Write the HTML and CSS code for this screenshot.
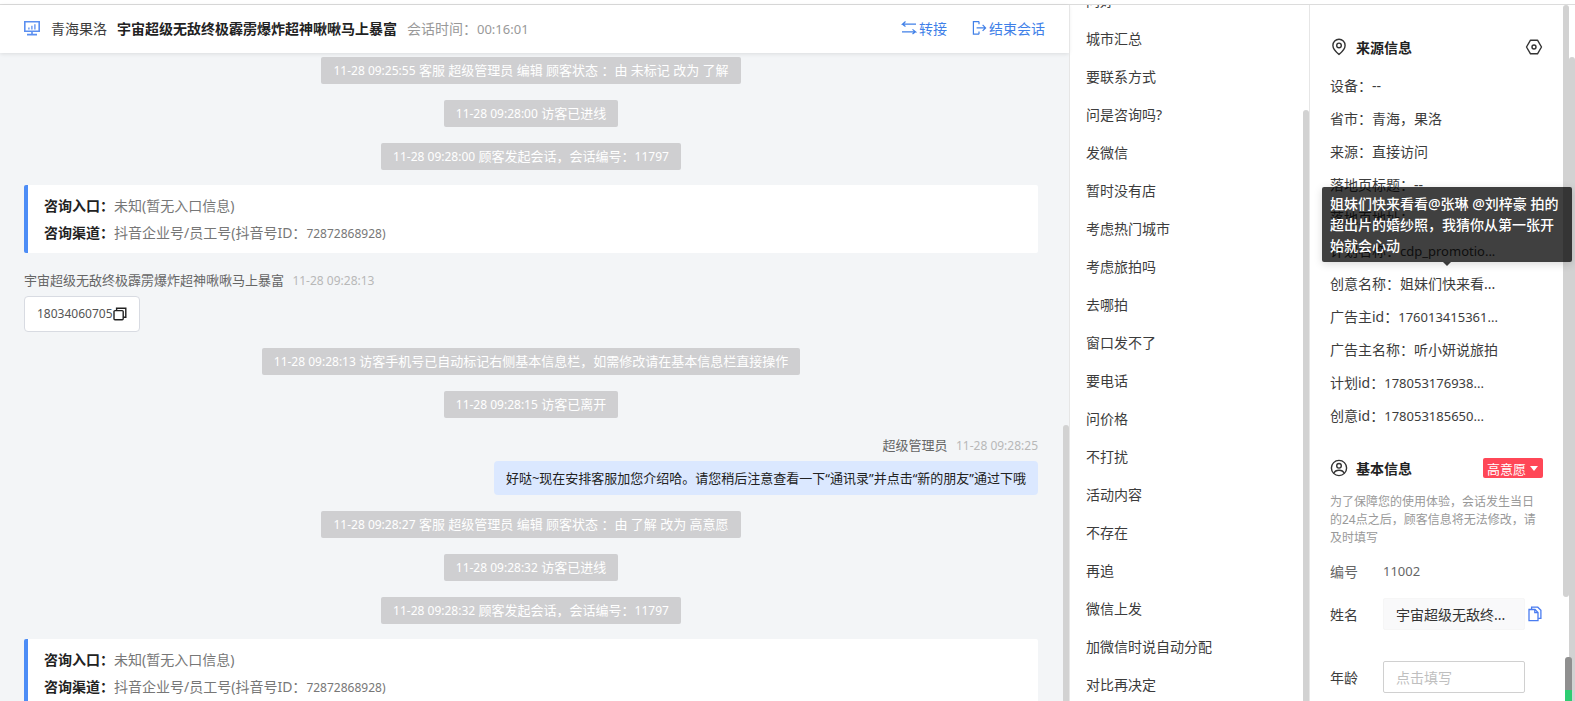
FILE: index.html
```
<!DOCTYPE html>
<html lang="zh-CN">
<head>
  <meta charset="UTF-8">
  <meta name="viewport" content="width=device-width, initial-scale=1.0">
  <title>会话详情</title>
  <link rel="stylesheet" href="styles.css">
</head>
<body>
  <div class="app">
    <main class="chat">
      <header class="chat-header">
        <svg class="icon-monitor" width="16" height="16" viewBox="0 0 16 16" fill="none" stroke="#5b8ff0" stroke-width="1.6">
          <path d="M0.800 1.800H15.200V11.200H0.800ZM8 11.500V14M3 14.600H13"/>
          <path d="M4.900 9.400V7.400M7.900 9.400V5.800M10.900 9.400V4.200" stroke-width="1.3"/>
        </svg>
        <span class="region">青海果洛</span>
        <h1>宇宙超级无敌终极霹雳爆炸超神啾啾马上暴富</h1>
        <p class="duration">会话时间：<span class="num">00:16:01</span></p>
        <div class="actions">
          <button type="button">
            <svg width="16" height="16" viewBox="0 0 16 16" fill="none" stroke="currentColor" stroke-width="1.2">
              <path d="M4.500 1.500L1.500 4.200H15M1.500 4.200L4.500 6.400M1 11.800H14.500L11.500 9.400M14.500 11.800L11.500 14"/>
            </svg>
            转接
          </button>
          <button type="button">
            <svg width="16" height="16" viewBox="0 0 16 16" fill="none" stroke="currentColor" stroke-width="1.2">
              <path d="M8 1.600H2.400V14.200H8M8 11.400V14.200M8 1.600V4.200M5.600 7.900H14.400M11.600 4.900L14.600 7.900L11.600 10.900"/>
            </svg>
            结束会话
          </button>
        </div>
      </header>

      <div class="messages">
        <p class="notice"><time>11-28 09:25:55</time> 客服 超级管理员 编辑 顾客状态 ：由 未标记 改为 了解</p>
        <p class="notice"><time>11-28 09:28:00</time> 访客已进线</p>
        <p class="notice"><time>11-28 09:28:00</time> 顾客发起会话，会话编号：<span class="num">11797</span></p>

        <dl class="entry">
          <div><dt>咨询入口：</dt><dd>未知(暂无入口信息)</dd></div>
          <div><dt>咨询渠道：</dt><dd>抖音企业号/员工号(抖音号ID：<span class="num">72872868928)</span></dd></div>
        </dl>

        <div class="message">
          <p class="meta">宇宙超级无敌终极霹雳爆炸超神啾啾马上暴富 <time>11-28 09:28:13</time></p>
          <div class="bubble visitor">
            <span class="num">18034060705</span>
            <button type="button" class="copy" aria-label="复制">
              <svg width="14" height="14" viewBox="0 0 14 14" fill="none" stroke="#222" stroke-width="1.4">
                <rect x="1" y="3.600" width="9.200" height="9.200" rx="1"/>
                <path d="M3.600 3.400V1.200H12.800V10.200H10.400"/>
              </svg>
            </button>
          </div>
        </div>

        <p class="notice"><time>11-28 09:28:13</time> 访客手机号已自动标记右侧基本信息栏，如需修改请在基本信息栏直接操作</p>
        <p class="notice"><time>11-28 09:28:15</time> 访客已离开</p>

        <div class="message mine">
          <p class="meta">超级管理员 <time>11-28 09:28:25</time></p>
          <div class="bubble">好哒~现在安排客服加您介绍哈。请您稍后注意查看一下“通讯录”并点击“新的朋友”通过下哦</div>
        </div>

        <p class="notice"><time>11-28 09:28:27</time> 客服 超级管理员 编辑 顾客状态 ：由 了解 改为 高意愿</p>
        <p class="notice"><time>11-28 09:28:32</time> 访客已进线</p>
        <p class="notice"><time>11-28 09:28:32</time> 顾客发起会话，会话编号：<span class="num">11797</span></p>

        <dl class="entry">
          <div><dt>咨询入口：</dt><dd>未知(暂无入口信息)</dd></div>
          <div><dt>咨询渠道：</dt><dd>抖音企业号/员工号(抖音号ID：<span class="num">72872868928)</span></dd></div>
        </dl>
      </div>
      <div class="thumb thumb-chat"></div>
    </main>

    <nav class="replies">
      <ul>
        <li>问好</li>
        <li>城市汇总</li>
        <li>要联系方式</li>
        <li>问是咨询吗?</li>
        <li>发微信</li>
        <li>暂时没有店</li>
        <li>考虑热门城市</li>
        <li>考虑旅拍吗</li>
        <li>去哪拍</li>
        <li>窗口发不了</li>
        <li>要电话</li>
        <li>问价格</li>
        <li>不打扰</li>
        <li>活动内容</li>
        <li>不存在</li>
        <li>再追</li>
        <li>微信上发</li>
        <li>加微信时说自动分配</li>
        <li>对比再决定</li>
      </ul>
      <div class="thumb thumb-replies"></div>
    </nav>

    <aside class="info">
      <section class="source">
        <div class="title">
          <svg width="18" height="18" viewBox="0 0 18 18" fill="none" stroke="#333" stroke-width="1.4">
            <path d="M9 16.400C5.400 13.400 2.900 10.600 2.900 7.400A6.100 6.100 0 0 1 15.100 7.400C15.100 10.600 12.600 13.400 9 16.400Z"/>
            <circle cx="9" cy="7.400" r="2.300"/>
          </svg>
          <h2>来源信息</h2>
          <button type="button" class="setting" aria-label="设置">
            <svg width="18" height="18" viewBox="0 0 18 18" fill="none" stroke="#333" stroke-width="1.4">
              <path d="M5.500 2.200H12.500L16.500 9L12.500 15.800H5.500L1.500 9Z" stroke-linejoin="round"/>
              <circle cx="9" cy="9" r="2"/>
            </svg>
          </button>
        </div>
        <ul>
          <li>设备：--</li>
          <li>省市：青海，果洛</li>
          <li>来源：直接访问</li>
          <li>落地页标题：--</li>
          <li>落地页地址：</li>
          <li>计划名称：<span class="num">cdp_promotio...</span></li>
          <li class="has-tip">
            创意名称：姐妹们快来看...
            <div class="tooltip" role="tooltip">姐妹们快来看看@张琳 @刘梓豪 拍的超出片的婚纱照，我猜你从第一张开始就会心动</div>
          </li>
          <li>广告主id：<span class="num">176013415361...</span></li>
          <li>广告主名称：听小妍说旅拍</li>
          <li>计划id：<span class="num">178053176938...</span></li>
          <li>创意id：<span class="num">178053185650...</span></li>
        </ul>
      </section>

      <section class="basic">
        <div class="title">
          <svg width="18" height="18" viewBox="0 0 18 18" fill="none" stroke="#333" stroke-width="1.4">
            <circle cx="9" cy="9" r="7.600"/>
            <circle cx="9" cy="6.800" r="2.300"/>
            <path d="M3.800 14.200C4.800 11.800 6.600 11.200 9 11.200S13.200 11.800 14.200 14.200"/>
          </svg>
          <h2>基本信息</h2>
          <button type="button" class="level">高意愿<i></i></button>
        </div>
        <p class="tips">为了保障您的使用体验，会话发生当日的24点之后，顾客信息将无法修改，请及时填写</p>
        <div class="row number">
          <span>编号</span>
          <span class="num">11002</span>
        </div>
        <div class="row">
          <label for="name">姓名</label>
          <input type="text" id="name" class="filled" value="宇宙超级无敌终..." readonly>
          <button type="button" class="copy" aria-label="复制姓名">
            <svg width="14" height="16" viewBox="0 0 14 16" fill="none" stroke="#4a7cf0" stroke-width="1.3">
              <path d="M1 3.500H7L10 6.500V14.700H1Z"/>
              <path d="M6.800 3.500V6.700H10"/>
              <path d="M3.600 3.200V1.200H9.800L12.900 4.300V12.400H10.200"/>
            </svg>
          </button>
        </div>
        <div class="row">
          <label for="age">年龄</label>
          <input type="text" id="age" placeholder="点击填写">
        </div>
      </section>
      <div class="thumb thumb-info"></div>
      <div class="thumb thumb-page"></div>
      <div class="thumb thumb-meter"></div>
    </aside>
  </div>
</body>
</html>
```
FILE: styles.css
```
* {
  box-sizing: border-box;
}
body {
  margin: 0;
  font-family: "Noto Sans", "Noto Sans CJK SC", sans-serif;
  font-size: 14px;
  color: #3c3c3c;
  background: #fff;
  padding-top: 4px;
  height: 100vh;
  overflow: hidden;
}
h1, h2, p, ul, dl, dd {
  margin: 0;
  padding: 0;
}
h1, h2 {
  font-size: 14px;
}
li {
  list-style: none;
}
button {
  display: flex;
  align-items: center;
  padding: 0;
  border: none;
  background: none;
  font: inherit;
  cursor: pointer;
}
svg {
  display: block;
  flex-shrink: 0;
}
.num {
  font-size: 13px;
  line-height: 1;
}
.app {
  display: flex;
  height: 100%;
  border-top: 1px solid #dcdcdc;
}

/* chat */
.chat {
  flex: 1;
  min-width: 0;
  display: flex;
  flex-direction: column;
  position: relative;
  background: #f3f5f7;
}
.chat-header {
  display: flex;
  align-items: center;
  flex-shrink: 0;
  height: 48px;
  padding: 0 24px 2px;
  background: #fff;
  box-shadow: 0 1px 4px rgba(0, 0, 0, 0.1);
  white-space: nowrap;
}
.region {
  margin: 0 10px 0 11px;
}
.chat-header h1 {
  color: #222;
}
.duration {
  margin-left: 10px;
  color: #999;
}
.actions {
  display: flex;
  gap: 24px;
  margin-left: auto;
}
.actions button {
  gap: 2px;
  color: #4080e8;
}
.messages {
  flex: 1;
  min-height: 0;
  overflow: hidden;
  display: flex;
  flex-direction: column;
  padding: 4px 31px 0 24px;
  font-size: 13px;
}
.messages > * {
  flex-shrink: 0;
}
.messages time,
.messages .num {
  font-size: 12px;
  line-height: 1;
}
.notice {
  align-self: center;
  margin-bottom: 16px;
  padding: 0 12px;
  line-height: 27px;
  color: #fff;
  background: #cfcfd1;
  border-radius: 2px;
}
.entry {
  margin: -1px 0 16px;
  padding: 7px 16px;
  border-left: 4px solid #4d8df6;
  border-radius: 2px;
  background: #fff;
  font-size: 14px;
  line-height: 27px;
}
.entry div {
  display: flex;
}
.entry dt {
  font-weight: bold;
  color: #222;
}
.entry dd {
  color: #777;
}
.message {
  display: flex;
  flex-direction: column;
  align-items: flex-start;
  gap: 5px;
  margin-bottom: 16px;
}
.message.mine {
  align-items: flex-end;
}
.meta {
  line-height: 22px;
  color: #666;
}
.meta time {
  margin-left: 5px;
  color: #b8b8b8;
}
.bubble {
  padding: 0 12px;
  line-height: 34px;
  border-radius: 4px;
  background: #dbe8ff;
  color: #222;
}
.bubble.visitor {
  display: flex;
  align-items: center;
  height: 36px;
  background: #fff;
  border: 1px solid #d8dbe2;
  color: #555;
}

/* quick replies */
.replies {
  position: relative;
  width: 241px;
  flex-shrink: 0;
  overflow: hidden;
  border-left: 1px solid #e6e6e6;
  border-right: 1px solid #e6e6e6;
}
.replies ul {
  margin-top: -23px;
}
.replies li {
  padding: 0 16px;
  line-height: 38px;
}

/* visitor info */
.info {
  position: relative;
  width: 265px;
  flex-shrink: 0;
  padding: 30px 32px 0 20px;
}
.title {
  display: flex;
  align-items: center;
  height: 24px;
}
.title h2 {
  margin-left: 8px;
  color: #222;
}
.title button {
  margin-left: auto;
}
.source ul {
  margin-top: 10px;
}
.source li {
  line-height: 33px;
  white-space: nowrap;
}
.has-tip {
  position: relative;
}
.tooltip {
  position: absolute;
  left: -8px;
  bottom: 38px;
  z-index: 2;
  width: 250px;
  padding: 6px 8px;
  border-radius: 2px;
  background: rgba(0, 0, 0, 0.75);
  box-shadow: 0 2px 8px rgba(0, 0, 0, 0.15);
  color: #fff;
  font-weight: 500;
  line-height: 21px;
  white-space: normal;
}
.tooltip::after {
  content: "";
  position: absolute;
  top: 100%;
  left: 50%;
  margin-left: -4px;
  border: 4px solid transparent;
  border-top-color: rgba(0, 0, 0, 0.75);
  border-bottom: none;
}
.basic {
  margin-top: 24px;
}
.level {
  height: 20px;
  padding: 0 5px 0 4px;
  gap: 4px;
  border-radius: 2px;
  background: #ff4757;
  color: #fff;
  font-size: 13px;
}
.level i {
  border: 4px solid transparent;
  border-top: 5px solid #fff;
  border-bottom: none;
}
.tips {
  margin-top: 13px;
  color: #999;
  font-size: 12px;
  line-height: 18px;
}
.row {
  display: flex;
  align-items: center;
  height: 32px;
  margin-bottom: 31px;
}
.row > :first-child {
  width: 53px;
}
.row.number {
  height: 22px;
  margin: 13px 0 16px;
  color: #666;
}
.row input {
  width: 142px;
  height: 32px;
  padding: 0 12px;
  border: 1px solid #d0d0d0;
  border-radius: 2px;
  background: #fff;
  color: #333;
  font: inherit;
}
.row input::placeholder {
  color: #bfbfbf;
}
.row input.filled {
  background: #f9f9fa;
  border-color: #f6f6f6;
}
.row .copy {
  margin-left: 3px;
}

/* scrollbar thumbs */
.thumb {
  position: absolute;
  width: 6px;
  bottom: 0;
  right: 0;
  border-radius: 3px 3px 0 0;
  background: #d2d2d2;
}
.thumb-chat {
  top: 420px;
}
.thumb-replies {
  top: 105px;
}
.thumb-info {
  top: 0;
  right: 6px;
  bottom: 104px;
  border-radius: 3px;
}
.thumb-page {
  top: 52px;
}
.thumb-meter {
  right: 3px;
  width: 7px;
  height: 44px;
  background: linear-gradient(#8f8f8f 0 33px, #2ecc71 33px);
}
```
